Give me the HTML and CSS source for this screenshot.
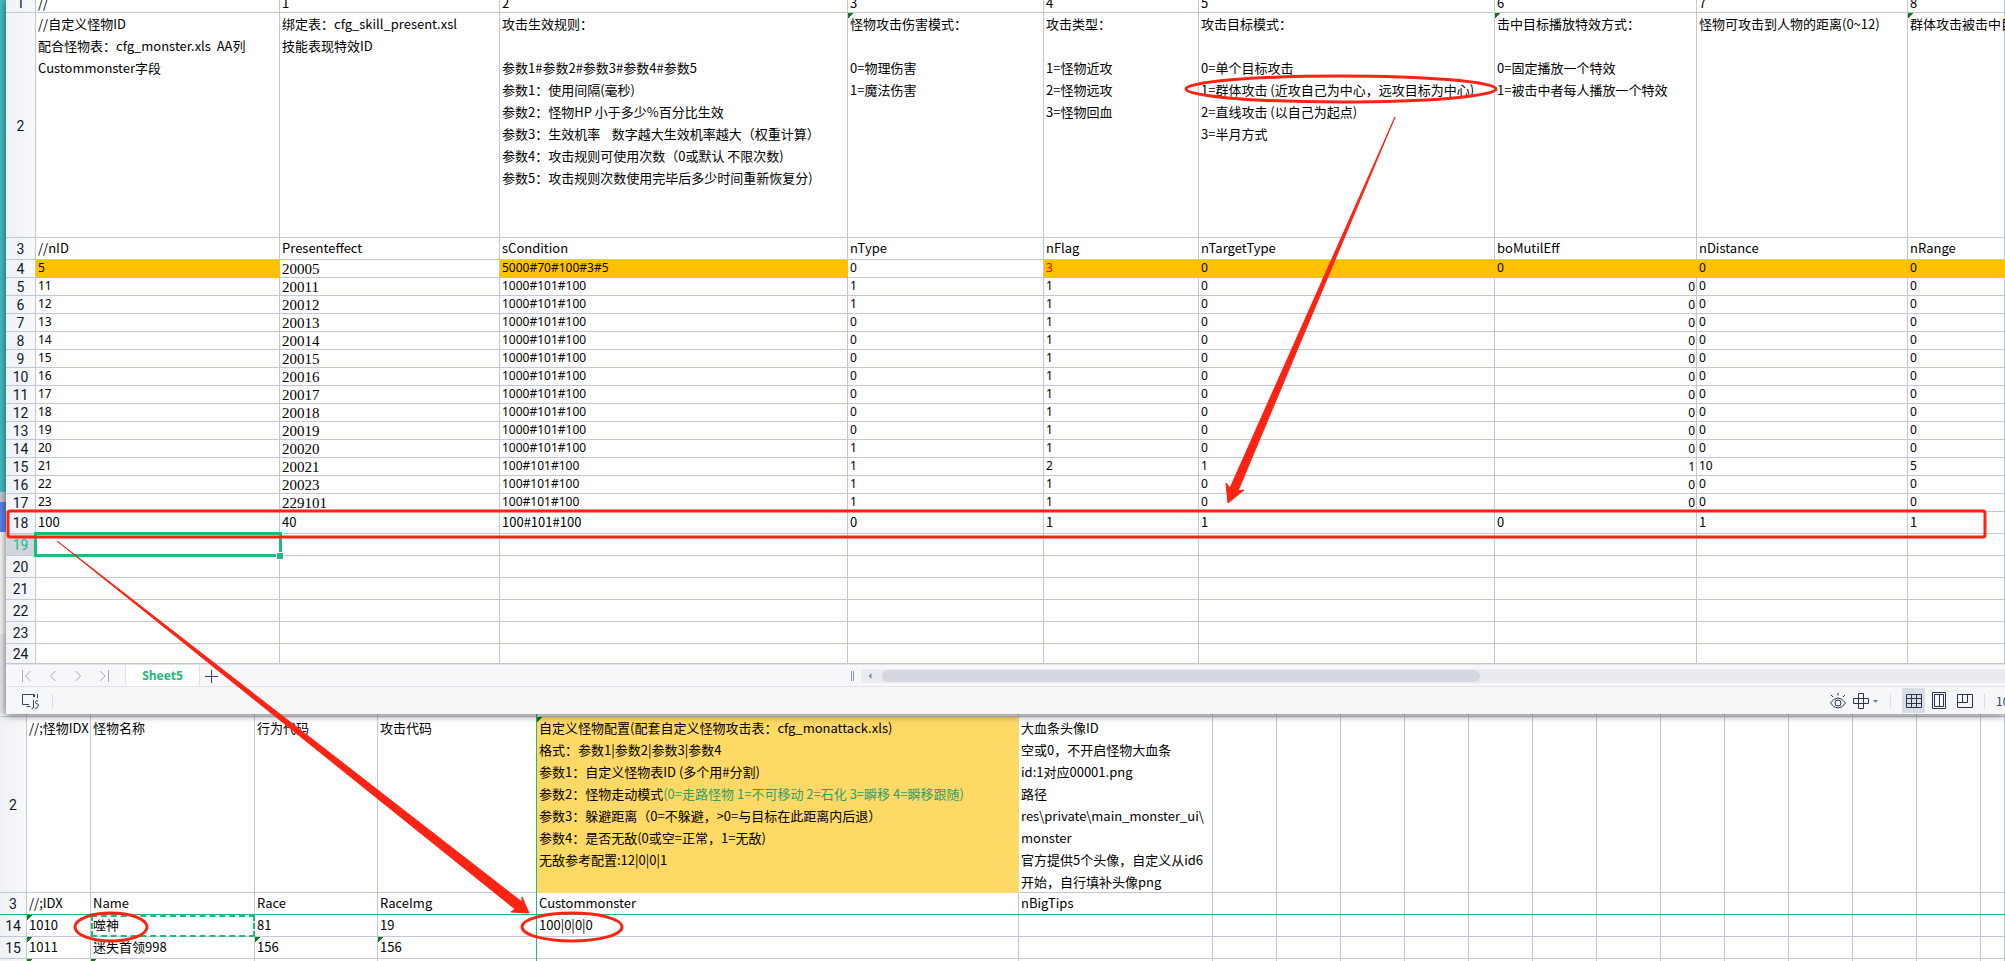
FILE: index.html
```html
<!DOCTYPE html>
<html lang="zh-CN">
<head>
<meta charset="utf-8">
<title>Sheet5</title>
<link rel="stylesheet" href="styles.css">
</head>
<body>
<main class="screen">
<div class="upper">
<div class="desktop"><span class="teal"></span><span class="edge"></span><span class="blue"></span><span class="pale"></span><span class="grey"></span></div>
<section class="window">
<table class="sheet sheet-top">
<colgroup><col class="w-head"><col class="w-id"><col class="w-eff"><col class="w-cond"><col class="w-type"><col class="w-flag"><col class="w-target"><col class="w-mutil"><col class="w-dist"><col></colgroup>
<tbody>
<tr class="cut"><th><div>1</div></th><td><div>//</div></td><td><div>1</div></td><td><div>2</div></td><td><div>3</div></td><td><div>4</div></td><td><div>5</div></td><td><div>6</div></td><td><div>7</div></td><td><div>8</div></td></tr>
<tr class="notes"><th>2</th>
<td>//自定义怪物ID<br>配合怪物表：cfg_monster.xls&nbsp; AA列<br>Custommonster字段</td>
<td>绑定表：cfg_skill_present.xsl<br>技能表现特效ID</td>
<td>攻击生效规则：<br><br>参数1#参数2#参数3#参数4#参数5<br>参数1：使用间隔(毫秒)<br>参数2：怪物HP 小于多少%百分比生效<br>参数3：生效机率&nbsp; &nbsp; 数字越大生效机率越大（权重计算）<br>参数4：攻击规则可使用次数（0或默认 不限次数)<br>参数5：攻击规则次数使用完毕后多少时间重新恢复分)</td>
<td class="flag">怪物攻击伤害模式：<br><br>0=物理伤害<br>1=魔法伤害</td>
<td>攻击类型：<br><br>1=怪物近攻<br>2=怪物远攻<br>3=怪物回血</td>
<td>攻击目标模式：<br><br>0=单个目标攻击<br>1=群体攻击 (近攻自己为中心，远攻目标为中心)<br>2=直线攻击 (以自己为起点)<br>3=半月方式</td>
<td class="flag">击中目标播放特效方式：<br><br>0=固定播放一个特效<br>1=被击中者每人播放一个特效</td>
<td>怪物可攻击到人物的距离(0~12)</td>
<td class="flag">群体攻击被击中目标范围</td></tr>
<tr><th>3</th><td>//nID</td><td>Presenteffect</td><td>sCondition</td><td>nType</td><td>nFlag</td><td>nTargetType</td><td>boMutilEff</td><td>nDistance</td><td>nRange</td></tr>
<tr class="small"><th>4</th><td class="gold">5</td><td class="song">20005</td><td class="gold">5000#70#100#3#5</td><td>0</td><td class="gold red">3</td><td class="gold">0</td><td class="gold">0</td><td class="gold">0</td><td class="gold">0</td></tr>
<tr class="small"><th>5</th><td>11</td><td class="song">20011</td><td>1000#101#100</td><td>1</td><td>1</td><td>0</td><td class="num">0</td><td>0</td><td>0</td></tr>
<tr class="small"><th>6</th><td>12</td><td class="song">20012</td><td>1000#101#100</td><td>1</td><td>1</td><td>0</td><td class="num">0</td><td>0</td><td>0</td></tr>
<tr class="small"><th>7</th><td>13</td><td class="song">20013</td><td>1000#101#100</td><td>0</td><td>1</td><td>0</td><td class="num">0</td><td>0</td><td>0</td></tr>
<tr class="small"><th>8</th><td>14</td><td class="song">20014</td><td>1000#101#100</td><td>0</td><td>1</td><td>0</td><td class="num">0</td><td>0</td><td>0</td></tr>
<tr class="small"><th>9</th><td>15</td><td class="song">20015</td><td>1000#101#100</td><td>0</td><td>1</td><td>0</td><td class="num">0</td><td>0</td><td>0</td></tr>
<tr class="small"><th>10</th><td>16</td><td class="song">20016</td><td>1000#101#100</td><td>0</td><td>1</td><td>0</td><td class="num">0</td><td>0</td><td>0</td></tr>
<tr class="small"><th>11</th><td>17</td><td class="song">20017</td><td>1000#101#100</td><td>0</td><td>1</td><td>0</td><td class="num">0</td><td>0</td><td>0</td></tr>
<tr class="small"><th>12</th><td>18</td><td class="song">20018</td><td>1000#101#100</td><td>0</td><td>1</td><td>0</td><td class="num">0</td><td>0</td><td>0</td></tr>
<tr class="small"><th>13</th><td>19</td><td class="song">20019</td><td>1000#101#100</td><td>0</td><td>1</td><td>0</td><td class="num">0</td><td>0</td><td>0</td></tr>
<tr class="small"><th>14</th><td>20</td><td class="song">20020</td><td>1000#101#100</td><td>1</td><td>1</td><td>0</td><td class="num">0</td><td>0</td><td>0</td></tr>
<tr class="small"><th>15</th><td>21</td><td class="song">20021</td><td>100#101#100</td><td>1</td><td>2</td><td>1</td><td class="num">1</td><td>10</td><td>5</td></tr>
<tr class="small"><th>16</th><td>22</td><td class="song">20023</td><td>100#101#100</td><td>1</td><td>1</td><td>0</td><td class="num">0</td><td>0</td><td>0</td></tr>
<tr class="small"><th>17</th><td>23</td><td class="song">229101</td><td>100#101#100</td><td>1</td><td>1</td><td>0</td><td class="num">0</td><td>0</td><td>0</td></tr>
<tr><th>18</th><td>100</td><td>40</td><td>100#101#100</td><td>0</td><td>1</td><td>1</td><td>0</td><td>1</td><td>1</td></tr>
<tr><th class="current">19</th><td class="selected"></td><td></td><td></td><td></td><td></td><td></td><td></td><td></td><td></td></tr>
<tr><th>20</th><td></td><td></td><td></td><td></td><td></td><td></td><td></td><td></td><td></td></tr>
<tr><th>21</th><td></td><td></td><td></td><td></td><td></td><td></td><td></td><td></td><td></td></tr>
<tr><th>22</th><td></td><td></td><td></td><td></td><td></td><td></td><td></td><td></td><td></td></tr>
<tr><th>23</th><td></td><td></td><td></td><td></td><td></td><td></td><td></td><td></td><td></td></tr>
<tr class="last"><th><div>24</div></th><td></td><td></td><td></td><td></td><td></td><td></td><td></td><td></td><td></td></tr>
</tbody>
</table>
<div class="tabbar">
<div class="nav">
<button aria-label="第一个工作表"><svg width="14" height="14" viewBox="0 0 14 14"><path d="M2.500 1v12M10.500 2l-5 5 5 5"/></svg></button>
<button aria-label="上一个工作表"><svg width="14" height="14" viewBox="0 0 14 14"><path d="M9.500 2l-5 5 5 5"/></svg></button>
<button aria-label="下一个工作表"><svg width="14" height="14" viewBox="0 0 14 14"><path d="M4.500 2l5 5-5 5"/></svg></button>
<button aria-label="最后一个工作表"><svg width="14" height="14" viewBox="0 0 14 14"><path d="M11.500 1v12M3 2l5 5-5 5"/></svg></button>
</div>
<button class="tab">Sheet5</button>
<button class="add" aria-label="新建工作表"><svg width="14" height="14" viewBox="0 0 14 14"><path d="M7.500 1v13M1 7.500h13"/></svg></button>
<div class="hscroll">
<span class="grip"></span>
<div class="track"><svg width="8" height="8" viewBox="0 0 8 8"><path d="M5.500 1v6l-3-3z"/></svg><span class="thumb"></span></div>
</div>
</div>
<div class="status">
<button class="macro" aria-label="JS 宏"><svg width="18" height="18" viewBox="0 0 18 18"><path d="M13.500 5V2.500H1.500v10H8M5.500 14.500h4M12.500 8v7q0 1.500-2 1.500M17 9q-2.500-1-2.500 1t2 2-.5 4q-1.500.5-2.500 0M12.500 2v3M16.500 6V2"/></svg></button>
<span class="rule"></span>
<div class="views">
<button aria-label="护眼模式" class="b-eye"><svg width="18" height="18" viewBox="0 0 18 18"><path d="M1.500 11q3.500-5 7.500-5t7.500 5q-3.500 5-7.500 5t-7.500-5z"/><circle cx="9" cy="11" r="3"/><path d="M9 1v2.500M2 3l2 2M16 3l-2 2"/></svg></button>
<button aria-label="阅读模式" class="b-cross"><svg width="26" height="16" viewBox="0 0 26 16"><path d="M5.500.5h5v15h-5zM.5 5.500h15v5H.5z"/><path class="solid" d="M20 7h5l-2.500 3z"/></svg></button>
<span class="rule"></span>
<button aria-label="普通视图" class="on"><svg width="16" height="16" viewBox="0 0 16 16"><path d="M.5 1.500h15v13H.5zM.5 5.500h15M.5 10.500h15M5.500 1.500v13M10.500 1.500v13"/></svg></button>
<button aria-label="页面布局"><svg width="16" height="17" viewBox="0 0 16 17"><path d="M1.500.5h13v16h-13zM3.500 2.500h9v12h-9zM8.500 2.500v12"/></svg></button>
<button aria-label="分页预览" class="b-page"><svg width="16" height="16" viewBox="0 0 16 16"><path d="M.5 1.500h15v13H.5zM5.500 1.500v8M10.500 1.500v8H.5"/></svg></button>
<span class="rule"></span>
<span class="zoom">100%</span>
</div>
</div>
</section>
</div>
<section class="behind">
<table class="sheet sheet-bottom">
<colgroup><col class="v-head"><col class="v-idx"><col class="v-name"><col class="v-race"><col class="v-img"><col class="v-custom"><col class="v-tips"><col class="v-std"><col class="v-std"><col class="v-std"><col class="v-std"><col class="v-std"><col class="v-std"><col class="v-std"><col class="v-std"><col class="v-std"><col class="v-std"><col class="v-std"><col class="v-std"><col></colgroup>
<tbody>
<tr class="sliver"><th></th><td></td><td></td><td></td><td class="fx"></td><td></td><td></td><td></td><td></td><td></td><td></td><td></td><td></td><td></td><td></td><td></td><td></td><td></td><td></td><td></td></tr>
<tr class="notes2"><th>2</th><td>//;怪物IDX</td><td>怪物名称</td><td>行为代码</td><td class="fx">攻击代码</td>
<td class="sand flag">自定义怪物配置(配套自定义怪物攻击表：cfg_monattack.xls)<br>格式：参数1|参数2|参数3|参数4<br>参数1：自定义怪物表ID (多个用#分割)<br>参数2：怪物走动模式<span class="modes">(0=走路怪物 1=不可移动 2=石化 3=瞬移 4=瞬移跟随)</span><br>参数3：躲避距离（0=不躲避，&gt;0=与目标在此距离内后退）<br>参数4：是否无敌(0或空=正常，1=无敌)<br>无敌参考配置:12|0|0|1</td>
<td>大血条头像ID<br>空或0，不开启怪物大血条<br>id:1对应00001.png<br>路径<br>res\private\main_monster_ui\<br>monster<br>官方提供5个头像，自定义从id6<br>开始，自行填补头像png</td><td></td><td></td><td></td><td></td><td></td><td></td><td></td><td></td><td></td><td></td><td></td><td></td><td></td></tr>
<tr class="frozen"><th>3</th><td>//;IDX</td><td>Name</td><td>Race</td><td class="fx">RaceImg</td><td>Custommonster</td><td>nBigTips</td><td></td><td></td><td></td><td></td><td></td><td></td><td></td><td></td><td></td><td></td><td></td><td></td><td></td></tr>
<tr><th>14</th><td class="flag">1010</td><td class="copied">噬神</td><td>81</td><td class="fx">19</td><td>100|0|0|0</td><td></td><td></td><td></td><td></td><td></td><td></td><td></td><td></td><td></td><td></td><td></td><td></td><td></td><td></td></tr>
<tr><th>15</th><td class="flag">1011</td><td>迷失首领998</td><td class="flag">156</td><td class="fx flag">156</td><td></td><td></td><td></td><td></td><td></td><td></td><td></td><td></td><td></td><td></td><td></td><td></td><td></td><td></td><td></td></tr>
<tr class="sliver"><th></th><td class="flag"></td><td class="flag"></td><td></td><td class="fx"></td><td></td><td></td><td></td><td></td><td></td><td></td><td></td><td></td><td></td><td></td><td></td><td></td><td></td><td></td><td></td></tr>
</tbody>
</table>
</section>
<svg class="marks" aria-hidden="true">
<ellipse cx="1341" cy="89" rx="155" ry="13"/>
<ellipse cx="111" cy="927" rx="36" ry="14"/>
<ellipse cx="572" cy="927" rx="50" ry="14"/>
<rect x="8" y="511" width="1977" height="26" rx="2"/>
<path d="M1395 117L1238 491l6-1-16 13-2-20 4 5z"/>
<path d="M57 541L522 902v-5l7 16-18-1 4-3z"/>
</svg>
</main>
</body>
</html>
```
FILE: styles.css
```css
* { box-sizing: border-box; }
body {
  margin: 0;
  background: #fff;
  color: #000;
  font: 13px/22px "Noto Sans CJK SC", "Noto Sans", sans-serif;
}
button {
  border: 0;
  padding: 0;
  background: none;
  font: inherit;
  display: flex;
  align-items: center;
  justify-content: center;
}
svg { display: block; fill: none; stroke: #39435a; }
.screen { position: relative; overflow: hidden; height: 100vh; }
.upper { display: flex; }

/* strip of the desktop left of the window */
.desktop { width: 6px; flex: none; display: flex; flex-direction: column; }
.teal { flex: 492; background: #46bec4; }
.edge { flex: 10; background: #c9cbd0; }
.blue { flex: 30; background: #5b86ee; }
.pale { flex: 102; background: #f7f7f8; }
.grey { flex: 80; background: #e6e8ec; }

.window {
  flex: 1;
  min-width: 0;
  position: relative;
  z-index: 1;
  background: #f5f7f9;
  box-shadow: 0 1px 8px rgba(0, 0, 0, .6);
}

/* grids */
.sheet {
  width: 100%;
  table-layout: fixed;
  border-collapse: separate;
  border-spacing: 0;
  background: #fff;
}
.sheet td, .sheet th {
  height: 22px;
  padding: 0 0 2px 2px;
  overflow: hidden;
  white-space: nowrap;
  text-align: left;
  vertical-align: middle;
  font-weight: normal;
  line-height: 20px;
  box-shadow: inset -1px -1px #c1c8db;
}
.sheet th {
  padding: 0 1px 0 0;
  text-align: center;
  color: #111a2c;
  background: linear-gradient(90deg, #eff1f4, #f8f9fb);
  font-family: Roboto, sans-serif;
  font-size: 14px;
}
.w-head { width: 30px; }
.w-id { width: 244px; }
.w-eff { width: 220px; }
.w-cond { width: 348px; }
.w-type { width: 196px; }
.w-flag { width: 155px; }
.w-target { width: 296px; }
.w-mutil { width: 202px; }
.w-dist { width: 211px; }
.v-head { width: 27px; }
.v-idx { width: 64px; }
.v-name { width: 164px; }
.v-race { width: 123px; }
.v-img { width: 159px; }
.v-custom { width: 482px; }
.v-tips { width: 194px; }
.v-std { width: 64px; }

.sheet .cut > * { height: 13px; padding-bottom: 0; vertical-align: bottom; }
.cut div { height: 13px; display: flex; align-items: flex-end; }
.cut th div { justify-content: center; }
.sheet .notes > * { height: 225px; }
.sheet .notes2 > * { height: 176px; }
.sheet .notes td, .sheet .notes2 td { vertical-align: top; padding-bottom: 0; line-height: 22px; }
.sheet .small > * { height: 18px; line-height: 16px; }
.sheet .small td { font-family: "Noto Sans", sans-serif; font-size: 12px; }
.sheet .last > * { height: 20px; padding-bottom: 0; }
.last div { height: 20px; }
.sheet .sliver > * { height: 3px; line-height: 3px; padding-bottom: 0; }

.sheet .small .song { font-family: "Liberation Serif", serif; font-size: 15px; line-height: 18px; padding-bottom: 0; }
.sheet .small .num { text-align: right; padding-right: 2px; line-height: 18px; padding-bottom: 0; }
.sheet .gold { background: #ffc000; box-shadow: none; }
.sheet .sand { background: #ffd966; box-shadow: none; }
.sheet .red { color: #f00; }
.modes { color: #2e9e68; }
.sheet .current { background: #d2d5dd; color: #21b97c; }

.sheet .flag {
  background-image: linear-gradient(135deg, #107c10 4px, transparent 4px);
  background-repeat: no-repeat;
}
.sheet .selected { position: relative; overflow: visible; }
.selected::before {
  content: "";
  position: absolute;
  inset: -2px -2px -1px;
  border: 3px solid #21b97c;
}
.selected::after {
  content: "";
  position: absolute;
  right: -3px;
  bottom: -3px;
  width: 6px;
  height: 6px;
  background: #21b97c;
  outline: 1px solid #fff;
}
.sheet .copied { position: relative; }
.copied::before {
  content: "";
  position: absolute;
  inset: 0;
  border: 2px dashed #21b97c;
}
.sheet .fx { box-shadow: inset -1px 0 #21b97c, inset 0 -1px #c1c8db; }
.sheet .frozen > * { box-shadow: inset 0 -1px #21b97c, inset -1px 0 #c1c8db; }
.sheet .frozen .fx { box-shadow: inset -1px -1px #21b97c; }

/* tab bar */
.tabbar { display: flex; height: 22px; border-top: 1px solid #e0e3e8; }
.nav {
  width: 120px;
  padding: 0 8px;
  display: flex;
  justify-content: space-around;
  border-right: 1px solid #dfe2e8;
}
.nav svg { stroke: #a5abb8; }
.tab {
  width: 73px;
  background: #fff;
  color: #21b97c;
  font: bold 12px/20px "Open Sans", sans-serif;
}
.add { width: 22px; border-left: 1px solid #dfe2e8; }
.hscroll { flex: 1; display: flex; align-items: center; margin-left: 630px; }
.grip { width: 3px; height: 10px; margin-right: 7px; border: solid #8b95ad; border-width: 0 1px; }
.track { flex: 1; height: 14px; display: flex; align-items: center; background: #e9ebf0; padding-left: 5px; }
.track svg { fill: #7f8ba6; stroke: none; }
.thumb { width: 52.5%; height: 12px; margin-left: 8px; border-radius: 6px; background: #d5d8e0; }

/* status bar */
.status { display: flex; align-items: center; height: 28px; border-top: 1px solid #e0e3e8; }
.macro { margin: 0 13px 0 15px; }
.rule { width: 1px; height: 14px; background: #dadde3; }
.views { margin-left: auto; display: flex; align-items: center; }
.views .rule { margin: 0 11px; }
.views svg { stroke: #2b3448; }
.views svg .solid { fill: #6c7791; stroke: none; }
.b-cross { margin-left: 6px; }
.on { width: 23px; height: 25px; background: #d9dde5; border-radius: 1px; }
.on + button { margin-left: 6px; }
.b-page { margin-left: 10px; }
.zoom { width: 9px; overflow: hidden; font-size: 12px; color: #39435a; }

/* red call-outs drawn over both sheets */
.marks { position: absolute; inset: 0; z-index: 2; width: 100%; height: 100%; pointer-events: none; stroke: #ff2314; stroke-width: 3px; }
.marks path { fill: #ff2314; stroke-width: 1px; }
```
